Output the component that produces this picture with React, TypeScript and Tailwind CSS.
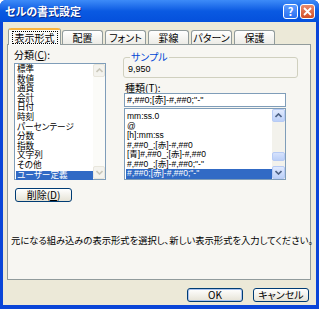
import type { ReactNode } from "react";

const CATEGORIES = [
  "標準",
  "数値",
  "通貨",
  "会計",
  "日付",
  "時刻",
  "パーセンテージ",
  "分数",
  "指数",
  "文字列",
  "その他",
  "ユーザー定義",
];

const FORMATS = [
  "mm:ss.0",
  "@",
  "[h]:mm:ss",
  "#,##0_;[赤]-#,##0",
  "[青]#,##0_;[赤]-#,##0",
  '#,##0_;[赤]-#,##0;"-"',
  '#,##0;[赤]-#,##0;"-"',
];

const TABS = ["配置", "フォント", "罫線", "パターン", "保護"];

function Chevron({ up, disabled }: { up?: boolean; disabled?: boolean }) {
  return (
    <svg width="7" height="5" viewBox="0 0 7 5" className={up ? "" : "rotate-180"}>
      <path
        d="M0.5 4 L3.5 1 L6.5 4"
        fill="none"
        stroke={disabled ? "#c9c7ba" : "#4d6185"}
        strokeWidth="1.6"
      />
    </svg>
  );
}

function ScrollBtn({ up, disabled }: { up?: boolean; disabled?: boolean }) {
  return (
    <div
      className={`flex h-[13px] w-full items-center justify-center rounded-[2px] border ${
        disabled
          ? "border-[#e8e6dc] bg-[#f4f3ee]"
          : "border-[#b7cbf5] bg-gradient-to-b from-[#e1eafe] to-[#bcd0f8]"
      }`}
    >
      <Chevron up={up} disabled={disabled} />
    </div>
  );
}

function XpButton({ children, className = "" }: { children: ReactNode; className?: string }) {
  return (
    <div
      className={`flex h-[14px] items-center justify-center rounded-[3px] border border-[#003c74] bg-gradient-to-b from-white to-[#e6e3d6] text-[10px] leading-none ${className}`}
    >
      {children}
    </div>
  );
}

export default function App() {
  return (
    <div className="flex h-[309px] w-[319px] flex-col overflow-hidden rounded-t-[6px] bg-[#0a45d8] font-['Noto_Sans_CJK_JP',sans-serif] text-[10px] text-black [font-feature-settings:'palt']">
      {/* title bar */}
      <div className="flex h-[22px] items-center bg-gradient-to-b from-[#3d8bf8] via-[#0a5ae2] to-[#0550dc] pr-[4px] pl-[5px]">
        <span className="flex-1 text-[11px] font-bold text-white [text-shadow:1px_1px_0_#0a2a8a]">
          セルの書式設定
        </span>
        <div className="flex h-[15px] w-[15px] items-center justify-center rounded-[3px] border border-white bg-gradient-to-b from-[#5c9bff] to-[#2a6ff0] text-[11px] font-bold leading-none text-white">
          ?
        </div>
        <div className="ml-[2px] flex h-[15px] w-[15px] items-center justify-center rounded-[3px] border border-white bg-gradient-to-b from-[#e98a6c] to-[#d24d24]">
          <svg width="9" height="9" viewBox="0 0 9 9">
            <path d="M1 1 L8 8 M8 1 L1 8" stroke="white" strokeWidth="1.8" />
          </svg>
        </div>
      </div>

      {/* body */}
      <div className="mx-[3px] mb-[4px] flex flex-1 flex-col bg-[#ece9d8] pt-[6px] pr-[5px] pl-[4px]">
        {/* tabs */}
        <div className="relative z-10 flex h-[16px] items-end pl-[1px]">
          <div className="mb-[-1px] flex h-[17px] w-[53px] flex-col rounded-t-[3px] border-x border-[#919b9c] bg-[#fbfbf9]">
            <div className="h-[2px] rounded-t-[3px] bg-[#f9b43d]" />
            <div className="flex flex-1 items-center justify-center">
              <span className="border border-dotted border-black px-[2px] leading-[11px]">表示形式</span>
            </div>
          </div>
          <div className="flex gap-[2px] pl-[1px]">
            {TABS.map((t) => (
              <div
                key={t}
                className="flex h-[14px] w-[41px] items-center justify-center rounded-t-[3px] border-x border-t border-[#919b9c] bg-gradient-to-b from-white to-[#ecebe6] leading-none"
              >
                {t}
              </div>
            ))}
          </div>
        </div>

        {/* panel */}
        <div className="flex h-[236px] flex-col border border-[#919b9c] bg-[#f7f6f2]">
          <div className="flex pt-[5px] pl-[6px]">
            {/* category column */}
            <div className="flex w-[92px] flex-col">
              <div className="h-[10px] leading-[10px]">
                分類(<span className="underline">C</span>):
              </div>
              <div className="mt-[3px] flex h-[117px] border border-[#7f9db9] bg-white">
                <div className="flex flex-1 flex-col pt-[1px] pl-[1px] font-['Liberation_Sans','Noto_Sans_CJK_JP',sans-serif] text-[8.6px]">
                  {CATEGORIES.map((c, i) => (
                    <div
                      key={c}
                      className={`h-[9.6px] pl-[1px] leading-[9.6px] ${
                        i === CATEGORIES.length - 1 ? "bg-[#316ac5] text-white" : ""
                      }`}
                    >
                      {c}
                    </div>
                  ))}
                </div>
                <div className="flex w-[12px] flex-col justify-between bg-[#fbfbf8]">
                  <ScrollBtn up disabled />
                  <ScrollBtn disabled />
                </div>
              </div>
              <XpButton className="mt-[8px] ml-[1px] w-[57px]">
                削除(<span className="underline">D</span>)
              </XpButton>
            </div>

            {/* format column */}
            <div className="ml-[17px] flex flex-col pt-[2px]">
              <fieldset className="h-[26px] w-[175px] rounded-[3px] border border-[#d0d0bf] px-[4px]">
                <legend className="ml-[2px] px-[1px] leading-[10px] text-[#0046d5]">サンプル</legend>
                <div className="mt-[2px] font-['Liberation_Sans',sans-serif] text-[9px] leading-[10px]">9,950</div>
              </fieldset>
              <div className="mt-[5px] ml-[2px] h-[10px] leading-[10px]">
                種類(<span className="underline">T</span>):
              </div>
              <div className="ml-[1px] flex h-[14px] w-[162px] items-center border border-[#7f9db9] bg-white pl-[2px]">
                <span className="font-['Liberation_Sans','Noto_Sans_CJK_JP',sans-serif] text-[9px] leading-none">
                  {'#,##0;[赤]-#,##0;"-"'}
                </span>
              </div>
              <div className="mt-[1px] ml-[1px] flex h-[72px] w-[162px] border border-[#7f9db9] bg-white">
                <div className="flex flex-1 flex-col pt-[3px] pl-[1px] font-['Liberation_Sans','Noto_Sans_CJK_JP',sans-serif] text-[8.5px]">
                  {FORMATS.map((f, i) => (
                    <div
                      key={f}
                      className={`h-[9.5px] pl-[1px] leading-[9.5px] ${
                        i === FORMATS.length - 1 ? "bg-[#316ac5] text-white" : ""
                      }`}
                    >
                      {f}
                    </div>
                  ))}
                </div>
                <div className="flex w-[13px] flex-col bg-[#f3f2ec]">
                  <ScrollBtn up />
                  <div className="flex flex-1 flex-col justify-end pb-[5px]">
                    <div className="h-[9px] rounded-[2px] border border-[#b7cbf5] bg-gradient-to-b from-[#d6e2fc] to-[#bcd0f8]" />
                  </div>
                  <ScrollBtn />
                </div>
              </div>
            </div>
          </div>

          <div className="mt-auto mb-[34px] pl-[3px] text-[9.3px] leading-[10px] whitespace-nowrap">
            元になる組み込みの表示形式を選択し、新しい表示形式を入力してください。
          </div>
        </div>

        {/* dialog buttons */}
        <div className="mt-[8px] flex justify-end gap-[10px] pr-[2px]">
          <XpButton className="w-[56px] shadow-[inset_0_0_0_1px_#a9c2ef]">OK</XpButton>
          <XpButton className="w-[56px]">キャンセル</XpButton>
        </div>
      </div>
    </div>
  );
}
